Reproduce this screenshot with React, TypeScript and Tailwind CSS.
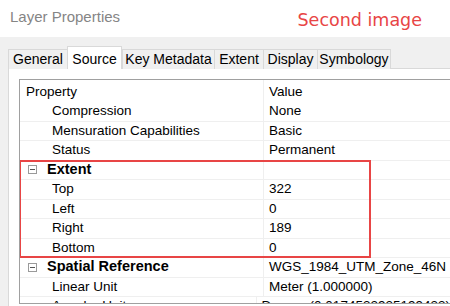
import React from 'react';

interface Row {
  label: string;
  value?: string;
  group?: boolean;
}

const tabs = [
  { name: 'General', w: 'w-[59px]' },
  { name: 'Source', w: 'w-[55px]', active: true },
  { name: 'Key Metadata', w: 'w-[92px]' },
  { name: 'Extent', w: 'w-[49px]' },
  { name: 'Display', w: 'w-[54px]' },
  { name: 'Symbology', w: 'w-[74px]' },
];

const topRows: Row[] = [
  { label: 'Compression', value: 'None' },
  { label: 'Mensuration Capabilities', value: 'Basic' },
  { label: 'Status', value: 'Permanent' },
];

const extentRows: Row[] = [
  { label: 'Extent', group: true },
  { label: 'Top', value: '322' },
  { label: 'Left', value: '0' },
  { label: 'Right', value: '189' },
  { label: 'Bottom', value: '0' },
];

const bottomRows: Row[] = [
  { label: 'Spatial Reference', value: 'WGS_1984_UTM_Zone_46N', group: true },
  { label: 'Linear Unit', value: 'Meter (1.000000)' },
  { label: 'Angular Unit', value: 'Degree (0.0174532925199433)' },
];

function CollapseIcon() {
  return (
    <span className="w-[9px] h-[9px] border border-[#9a9a9a] flex items-center justify-center mr-[10px] ml-[1px]">
      <span className="w-[5px] h-px bg-[#555]" />
    </span>
  );
}

function PropRow({ row }: { row: Row }) {
  return (
    <div className="flex h-[19.5px] border-b border-[#efefef]">
      <div className="w-[244px] border-r border-[#efefef] flex items-center pl-[7px]">
        {row.group ? (
          <>
            <CollapseIcon />
            <span className="font-bold text-[14.5px]">{row.label}</span>
          </>
        ) : (
          <span className="pl-[25px]">{row.label}</span>
        )}
      </div>
      <div className="flex-1 flex items-center pl-[5px] whitespace-nowrap">{row.value}</div>
    </div>
  );
}

export default function App() {
  return (
    <div className="w-[450px] h-[306px] overflow-hidden bg-white flex flex-col font-['Liberation_Sans',Arial,sans-serif] text-[13.5px] text-black">
      {/* Title bar */}
      <div className="h-[37px] flex items-center pl-[10px] pr-[28px] shrink-0">
        <span className="text-[15px] text-[#858585] -mt-[3px]">Layer Properties</span>
        <span className="ml-auto text-[17.5px] text-[#e84545] font-['DejaVu_Sans',sans-serif] mt-[4px]">Second image</span>
      </div>

      {/* Dialog body */}
      <div className="flex-1 bg-[#f0f0f0] pl-[8px] pt-[9px] flex flex-col min-h-0">
        <div className="flex items-end h-[23px] relative z-10">
          {tabs.map((t) =>
            t.active ? (
              <div
                key={t.name}
                className={`${t.w} h-[23px] bg-white border border-b-0 border-[#d9d9d9] flex items-start justify-center pt-[2px] text-[14px]`}
              >
                {t.name}
              </div>
            ) : (
              <div
                key={t.name}
                className={`${t.w} h-[20px] bg-[#f0f0f0] border border-b-0 border-r-0 border-[#d9d9d9] flex items-center justify-center text-[14px] last:border-r`}
              >
                {t.name}
              </div>
            )
          )}
        </div>

        <div className="flex-1 bg-white border-t border-l border-[#d9d9d9] -mt-px pl-[10px] pt-[10px] min-h-0 flex flex-col">
          <div className="h-[225px] border border-r-0 border-[#a0a0a0] overflow-hidden">
            {/* Header */}
            <div className="flex h-[22px]">
              <div className="w-[244px] border-r border-[#efefef] flex items-center pl-[6px] pt-[2px]">Property</div>
              <div className="flex-1 flex items-center pl-[5px] pt-[2px]">Value</div>
            </div>
            {topRows.map((r) => (
              <PropRow key={r.label} row={r} />
            ))}
            <div className="relative">
              {extentRows.map((r) => (
                <PropRow key={r.label} row={r} />
              ))}
              <div className="absolute -left-px -top-px w-[352px] h-[calc(100%+1px)] border-2 border-[#e84545] pointer-events-none" />
            </div>
            {bottomRows.map((r) => (
              <PropRow key={r.label} row={r} />
            ))}
          </div>
        </div>
      </div>
    </div>
  );
}
